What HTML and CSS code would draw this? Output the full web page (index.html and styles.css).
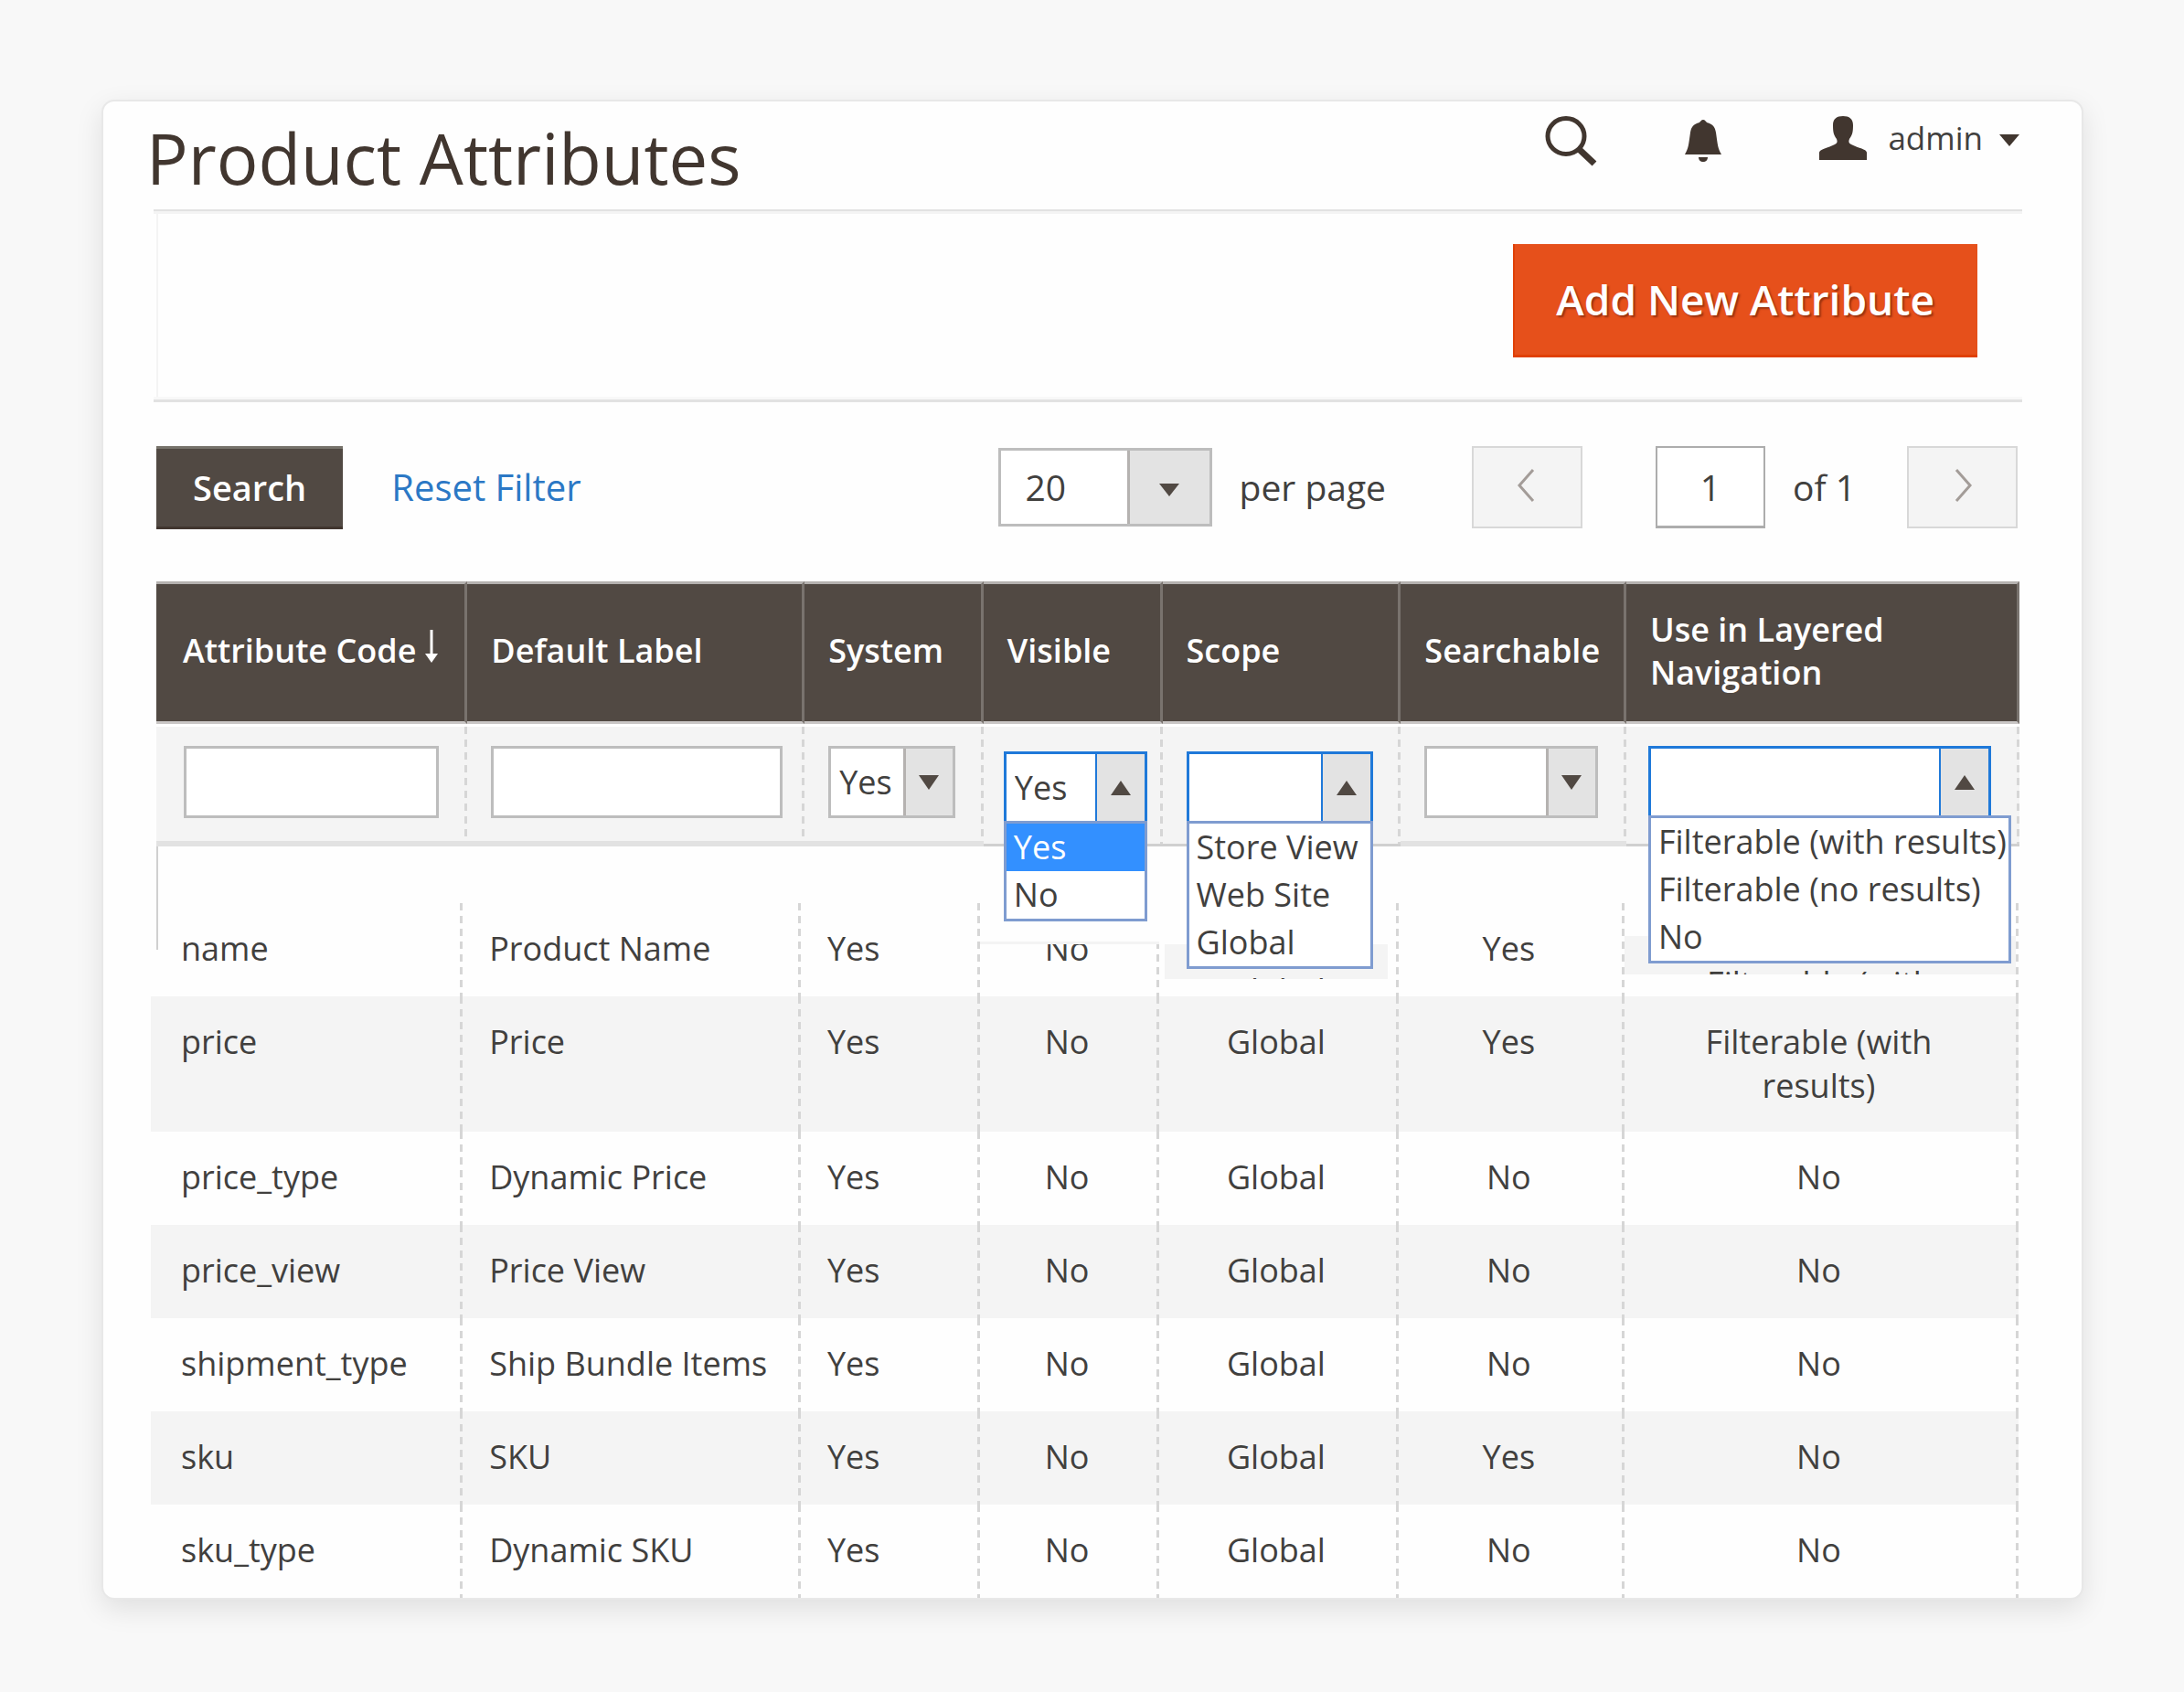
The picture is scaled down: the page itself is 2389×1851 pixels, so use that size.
FILE: index.html
```html
<!DOCTYPE html>
<html lang="en">
<head>
    <meta charset="UTF-8">
    <meta name="viewport" content="width=device-width, initial-scale=1.0">
    <title>Product Attributes</title>
    <link rel="stylesheet" href="styles.css">
</head>
<body>

    <main class="card">
        <header class="page-header">
            <h1>Product Attributes</h1>
            <div class="header-tools">
                <button class="icon-btn search-btn" aria-label="Search">
                    <svg width="60" height="56" viewBox="0 0 60 56">
                        <ellipse cx="24" cy="22" rx="20" ry="19.5" fill="none" stroke="#41362f" stroke-width="5"/>
                        <path d="M38 36 L55 52" stroke="#41362f" stroke-width="7"/>
                    </svg>
                </button>
                <button class="icon-btn bell-btn" aria-label="Notifications">
                    <svg width="44" height="48" viewBox="0 0 44 48">
                        <path d="M22 0 C24 0 25 2 26 3 C33 5 35 8 36 14 C38 28 38 31 42 38 L2 38 C6 31 6 28 8 14 C9 8 11 5 18 3 C19 2 20 0 22 0 Z" fill="#41362f"/>
                        <path d="M17 41 L27 41 C27 44 25 46 22 46 C19 46 17 44 17 41 Z" fill="#41362f"/>
                    </svg>
                </button>
                <button class="icon-btn account">
                    <svg width="54" height="50" viewBox="0 0 54 50">
                        <path d="M27 1 C34 1 38 4 38 11 C38 19 37 22 34 26 C33 29 33 30 36 32 C43 36 53 37 53 41 L53 49 L1 49 L1 41 C1 37 11 36 18 32 C21 30 21 29 20 26 C17 22 16 19 16 11 C16 4 20 1 27 1 Z" fill="#41362f"/>
                    </svg>
                    <span>admin</span>
                    <svg class="caret" width="22" height="13" viewBox="0 0 22 13"><path d="M0 0 H22 L11 13 Z" fill="#41362f"/></svg>
                </button>
            </div>
        </header>

        <div class="page-actions">
            <button class="btn-primary">Add New Attribute</button>
        </div>

        <div class="toolbar">
            <button class="btn-search">Search</button>
            <a class="reset" href="#">Reset Filter</a>

            <div class="per-page">
                <div class="select select-lg">
                    <select id="limit"><option>20</option></select>
                    <span class="arrow"><svg width="22" height="14" viewBox="0 0 22 14"><path d="M0 0 H22 L11 14 Z"/></svg></span>
                </div>
                <label for="limit">per page</label>
            </div>

            <div class="pager">
                <button class="page-btn" aria-label="Previous page">
                    <svg width="22" height="38" viewBox="0 0 22 38"><path d="M17 2 L2 19 L17 36"/></svg>
                </button>
                <div class="page-current">
                    <input id="page" type="text" value="1">
                    <label for="page">of 1</label>
                </div>
                <button class="page-btn" aria-label="Next page">
                    <svg width="22" height="38" viewBox="0 0 22 38"><path d="M5 2 L20 19 L5 36"/></svg>
                </button>
            </div>
        </div>

        <div class="grid">
            <table class="grid-head">
                <colgroup>
                    <col class="c-code"><col class="c-label"><col class="c-flag"><col class="c-flag"><col class="c-scope"><col class="c-search"><col class="c-nav">
                </colgroup>
                <thead>
                    <tr>
                        <th>Attribute Code<svg class="sort" width="14" height="36" viewBox="0 0 14 36"><path d="M7 0 V30" stroke="#fff" stroke-width="3"/><path d="M0 26 H14 L7 36 Z" fill="#fff"/></svg></th>
                        <th>Default Label</th>
                        <th>System</th>
                        <th>Visible</th>
                        <th>Scope</th>
                        <th>Searchable</th>
                        <th>Use in Layered Navigation</th>
                    </tr>
                </thead>
                <tbody>
                    <tr class="filters">
                        <td><input type="text" aria-label="Attribute Code"></td>
                        <td><input type="text" aria-label="Default Label"></td>
                        <td>
                            <div class="select">
                                <select aria-label="System"><option>Yes</option><option>No</option></select>
                                <span class="arrow"><svg width="22" height="16" viewBox="0 0 22 16"><path d="M0 0 H22 L11 16 Z"/></svg></span>
                            </div>
                        </td>
                        <td class="opened lowered">
                            <div class="select open">
                                <select aria-label="Visible"><option>Yes</option><option>No</option></select>
                                <span class="arrow"><svg width="22" height="16" viewBox="0 0 22 16"><path d="M0 16 H22 L11 0 Z"/></svg></span>
                                <ul class="options">
                                    <li class="selected">Yes</li>
                                    <li>No</li>
                                </ul>
                            </div>
                        </td>
                        <td class="opened lowered">
                            <div class="select open">
                                <select aria-label="Scope"><option></option><option>Store View</option><option>Web Site</option><option>Global</option></select>
                                <span class="arrow"><svg width="22" height="16" viewBox="0 0 22 16"><path d="M0 16 H22 L11 0 Z"/></svg></span>
                                <ul class="options">
                                    <li>Store View</li>
                                    <li>Web Site</li>
                                    <li>Global</li>
                                </ul>
                            </div>
                        </td>
                        <td>
                            <div class="select">
                                <select aria-label="Searchable"><option></option><option>Yes</option><option>No</option></select>
                                <span class="arrow"><svg width="22" height="16" viewBox="0 0 22 16"><path d="M0 0 H22 L11 16 Z"/></svg></span>
                            </div>
                        </td>
                        <td class="opened">
                            <div class="select open">
                                <select aria-label="Use in Layered Navigation"><option></option><option>Filterable (with results)</option><option>Filterable (no results)</option><option>No</option></select>
                                <span class="arrow"><svg width="22" height="16" viewBox="0 0 22 16"><path d="M0 16 H22 L11 0 Z"/></svg></span>
                                <ul class="options options-wide">
                                    <li>Filterable (with results)</li>
                                    <li>Filterable (no results)</li>
                                    <li>No</li>
                                </ul>
                            </div>
                        </td>
                    </tr>
                </tbody>
            </table>

            <table class="grid-body">
                <colgroup>
                    <col class="c-code"><col class="c-label"><col class="c-flag"><col class="c-flag"><col class="c-scope"><col class="c-search"><col class="c-nav">
                </colgroup>
                <tbody>
                    <tr>
                        <td>name</td><td>Product Name</td><td>Yes</td>
                        <td>No<div class="cover"></div></td>
                        <td><div class="peek">Global</div></td>
                        <td>Yes</td>
                        <td><div class="peek peek-wide">Filterable (with</div></td>
                    </tr>
                    <tr>
                        <td>price</td><td>Price</td><td>Yes</td><td>No</td><td>Global</td><td>Yes</td><td>Filterable (with results)</td>
                    </tr>
                    <tr>
                        <td>price_type</td><td>Dynamic Price</td><td>Yes</td><td>No</td><td>Global</td><td>No</td><td>No</td>
                    </tr>
                    <tr>
                        <td>price_view</td><td>Price View</td><td>Yes</td><td>No</td><td>Global</td><td>No</td><td>No</td>
                    </tr>
                    <tr>
                        <td>shipment_type</td><td>Ship Bundle Items</td><td>Yes</td><td>No</td><td>Global</td><td>No</td><td>No</td>
                    </tr>
                    <tr>
                        <td>sku</td><td>SKU</td><td>Yes</td><td>No</td><td>Global</td><td>Yes</td><td>No</td>
                    </tr>
                    <tr>
                        <td>sku_type</td><td>Dynamic SKU</td><td>Yes</td><td>No</td><td>Global</td><td>No</td><td>No</td>
                    </tr>
                </tbody>
            </table>
        </div>
    </main>

</body>
</html>
```
FILE: styles.css
```css
* {
    box-sizing: border-box;
}

body {
    margin: 0;
    padding: 109px 110px 104px 111px;
    background: #f8f8f8;
    color: #41403e;
    font-family: "Open Sans", sans-serif;
    font-size: 36px;
    line-height: 48px;
}

button,
input,
select {
    font: inherit;
    color: inherit;
    margin: 0;
    border-radius: 0;
}

button {
    border: none;
    cursor: pointer;
}

.card {
    padding: 0 65px 0 55px;
    background: #fefefe;
    border: 2px solid #e8e8e8;
    border-radius: 14px;
    box-shadow: 0 10px 30px rgba(0, 0, 0, 0.1);
}

/* header */
.page-header {
    display: flex;
    justify-content: space-between;
    align-items: flex-start;
    margin-left: -8px;
}

h1 {
    margin: 0;
    padding-top: 6px;
    color: #41362f;
    font-size: 76px;
    font-weight: 400;
    line-height: 112px;
}

.header-tools {
    display: flex;
    align-items: center;
    height: 87px;
}

.icon-btn {
    display: flex;
    align-items: center;
    padding: 0;
    background: none;
}

.search-btn {
    margin-right: 92px;
}

.bell-btn {
    margin-right: 104px;
}

.account {
    margin-bottom: 8px;
    gap: 22px;
    font-size: 35px;
}

.account .caret {
    margin: 6px 3px 0 -4px;
}

/* add button */
.page-actions {
    display: flex;
    justify-content: flex-end;
    padding: 33px 49px 46px 0;
    border-top: 2px solid #e2e2e2;
    border-bottom: 3px solid #e2e2e2;
    box-shadow: inset 0 3px #f4f4f4, inset 0 -3px #f8f8f8;
    background: linear-gradient(#f4f4f4, #f4f4f4) 3px 0 / 2px 100% no-repeat;
}

.btn-primary {
    height: 124px;
    margin-top: 3px;
    padding: 0 47px 5px;
    background: #e6501b;
    box-shadow: inset 2px -3px #e04006;
    color: #fff;
    font-size: 46px;
    font-weight: 600;
    text-shadow: 2px 2px 2px rgba(80, 20, 0, 0.5);
}

/* toolbar */
.toolbar {
    display: flex;
    align-items: center;
    height: 90px;
    margin: 48px 5px 58px 3px;
    font-size: 39px;
}

.btn-search {
    height: 91px;
    padding: 0 40px;
    background: #514943;
    border-top: 3px solid #77736b;
    border-bottom: 3px solid #41362f;
    color: #fff;
    font-size: 38px;
    font-weight: 600;
}

.reset {
    margin-left: 53px;
    color: #2b78c5;
    font-size: 40px;
    text-decoration: none;
}

.per-page {
    display: flex;
    align-items: center;
    gap: 30px;
    margin-left: auto;
}

.pager {
    display: flex;
    align-items: center;
    justify-content: space-between;
    width: 597px;
    margin-left: 94px;
}

.page-btn {
    display: flex;
    align-items: center;
    justify-content: center;
    width: 121px;
    height: 90px;
    padding: 0 0 4px;
    background: #f4f4f4;
    border: 2px solid #d8d8d8;
}

.page-btn path {
    fill: none;
    stroke: #a39c98;
    stroke-width: 3;
}

.page-current {
    display: flex;
    align-items: center;
    gap: 30px;
    margin-left: 24px;
}

.page-current input {
    width: 120px;
    height: 90px;
    padding: 0;
    border: 2px solid #adadad;
    border-bottom-width: 3px;
    background: #fff;
    text-align: center;
}

/* drop-downs */
.select {
    position: relative;
    display: flex;
    height: 79px;
    border: 3px solid #bdbdbd;
    background: #fff;
}

.select select {
    flex: 1;
    min-width: 0;
    padding: 0 0 0 9px;
    appearance: none;
    border: none;
    outline: none;
    background: none;
}

.select .arrow {
    display: flex;
    align-items: center;
    justify-content: center;
    width: 54px;
    background: #e3e3e3;
    border-left: 3px solid #b5b2b0;
}

.arrow path {
    fill: #514943;
}

.select-lg {
    width: 234px;
    height: 86px;
}

.select-lg select {
    padding-left: 27px;
}

.select-lg .arrow {
    width: 90px;
    padding-top: 6px;
}

.select.open {
    border-color: #1f79d9;
}

.select.open .arrow {
    border-left: 2px solid #1f79d9;
}

.options {
    position: absolute;
    top: 73px;
    left: -3px;
    right: -3px;
    z-index: 2;
    margin: 0;
    padding: 0;
    list-style: none;
    background: #fff;
    border: 3px solid #7f9cd0;
    line-height: 52px;
    white-space: nowrap;
}

.options li {
    padding-left: 8px;
}

.options .selected {
    background: #3390ff;
    color: #fff;
}

.options-wide {
    right: -25px;
}

/* table */
.grid {
    position: relative;
}

/* left edge runs past the filter row */
.grid::before {
    content: "";
    position: absolute;
    top: 0;
    left: 3px;
    width: 2px;
    height: 403px;
    background: #d0d0d0;
}

table {
    position: relative;
    table-layout: fixed;
    border-collapse: separate;
    border-spacing: 0;
}

.c-code { width: 16.7%; }
.c-label { width: 18.1%; }
.c-flag { width: 9.6%; }
.c-scope { width: 12.8%; }
.c-search { width: 12.1%; }
.c-nav { width: 21.1%; }

.grid-head {
    width: calc(100% - 6px);
    margin-left: 3px;
    z-index: 1;
}

th {
    height: 156px;
    padding: 0 10px 5px 26px;
    background: #514943;
    border-top: 3px solid #b5b2b0;
    border-bottom: 3px solid #c9c6c5;
    border-right: 3px solid #79736e;
    color: #fff;
    font-weight: 600;
    line-height: 47px;
    text-align: left;
}

th:first-child {
    padding-left: 29px;
    padding-right: 0;
    white-space: nowrap;
}

th:last-child {
    padding-right: 100px;
}

.sort {
    margin-left: 10px;
}

td {
    position: relative;
    background: repeating-linear-gradient(#d6d6d6 0 8px, transparent 8px 14px) right top / 3px 100% no-repeat;
}

.filters td {
    height: 134px;
    padding: 21px 31px 0 26px;
    background-color: #f4f4f4;
    border-top: 3px solid #fff;
    border-bottom: 6px solid #e2e2e2;
    vertical-align: top;
}

.filters td:first-child {
    padding-left: 30px;
}

.filters td:nth-child(2) {
    padding-right: 24px;
}

.filters input {
    display: block;
    width: 100%;
    height: 79px;
    border: 3px solid #bdbdbd;
    background: #fff;
}

.filters .opened {
    padding-left: 24px;
    border-bottom: 3px solid #d0d0d0;
}

.filters .lowered {
    padding: 27px 17px 0 22px;
}

.filters .lowered + .lowered {
    padding: 27px 30px 0 26px;
}

.grid-body {
    width: calc(100% - 1px);
    margin: 62px 0 0 -3px;
}

.grid-body tr:nth-child(even) {
    background: #f4f4f4;
}

.grid-body td {
    height: 102px;
    padding: 26px 0 26px 29px;
    vertical-align: top;
}

.grid-body td:first-child {
    padding-left: 33px;
}

.grid-body td:nth-child(n+4) {
    padding-left: 0;
    padding-right: 6px;
    text-align: center;
}

.grid-body td:last-child {
    padding: 26px 83px 26px 77px;
}

/* open menus hide the top of the first row */
.cover {
    position: absolute;
    top: 0;
    left: 0;
    right: 0;
    height: 45px;
    background: #fefefe;
    border-bottom: 3px solid #f4f4f4;
}

.peek {
    position: absolute;
    top: 45px;
    left: 6px;
    right: 12px;
    height: 38px;
    padding-top: 27px;
    overflow: hidden;
    background: #f4f4f4;
}

.grid-body .peek-wide {
    top: 36px;
    left: 0;
    right: 3px;
    height: 42px;
    padding-top: 28px;
}
```
